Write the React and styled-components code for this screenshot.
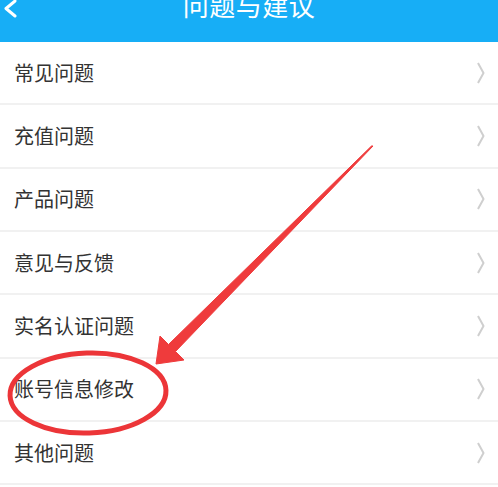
import React from "react";
import styled, { createGlobalStyle } from "styled-components";

const GlobalStyle = createGlobalStyle`
  html, body {
    margin: 0;
    padding: 0;
    background: #fff;
    font-family: "Noto Sans CJK SC", "Noto Sans", sans-serif;
  }
`;

const Screen = styled.div`
  position: relative;
  width: 498px;
  height: 487px;
  overflow: hidden;
  background: #fff;
`;

const Header = styled.div`
  height: 42px;
  background: #17aef6;
  display: flex;
  justify-content: center;
  align-items: flex-start;
  position: relative;
  overflow: hidden;
`;

const BackBtn = styled.div`
  position: absolute;
  left: 3px;
  top: -1px;
  width: 14px;
  height: 18px;
`;

const Title = styled.h1`
  margin: -12px 0 0;
  font-size: 26px;
  font-weight: 400;
  letter-spacing: 0.5px;
  color: #fff;
  line-height: 34px;
`;

const List = styled.div`
  display: flex;
  flex-direction: column;
`;

const Row = styled.div`
  box-sizing: border-box;
  height: 63.33px;
  display: flex;
  align-items: center;
  justify-content: space-between;
  padding: 0 14px 0 14px;
  border-bottom: 2px solid #f1f1f1;
`;

const Label = styled.span`
  font-size: 20px;
  color: #333;
  line-height: 1;
`;

const Chevron = styled.svg`
  width: 8px;
  height: 22px;
  margin-right: -1px;
`;

const Overlay = styled.svg`
  position: absolute;
  left: 0;
  top: 0;
  pointer-events: none;
`;

const items = [
  "常见问题",
  "充值问题",
  "产品问题",
  "意见与反馈",
  "实名认证问题",
  "账号信息修改",
  "其他问题",
];

export default function App() {
  return (
    <Screen>
      <GlobalStyle />
      <Header>
        <BackBtn>
          <svg width="14" height="18" viewBox="0 0 14 18">
            <path d="M12 1 L3 8.5 L12 16" fill="none" stroke="#fff" strokeWidth="3" strokeLinecap="round" strokeLinejoin="round" />
          </svg>
        </BackBtn>
        <Title>问题与建议</Title>
      </Header>
      <List>
        {items.map((t) => (
          <Row key={t}>
            <Label>{t}</Label>
            <Chevron viewBox="0 0 8 22">
              <path d="M1 1 L6.5 11 L1 21" fill="none" stroke="#cfcfcf" strokeWidth="2" strokeLinejoin="round" />
            </Chevron>
          </Row>
        ))}
      </List>
      <Overlay width="498" height="487" viewBox="0 0 498 487">
        <ellipse cx="88" cy="393" rx="78" ry="40" fill="none" stroke="#ec3538" strokeWidth="5" transform="rotate(-2 88 393)" />
        <path
          d="M373 146 L175.5 351.5 L184 360 L156 364 L160 336 L168.5 344.5 L371.5 146 Z"
          fill="#ef3b3c"
          stroke="#ef3b3c"
          strokeWidth="1"
          strokeLinejoin="round"
        />
      </Overlay>
    </Screen>
  );
}
